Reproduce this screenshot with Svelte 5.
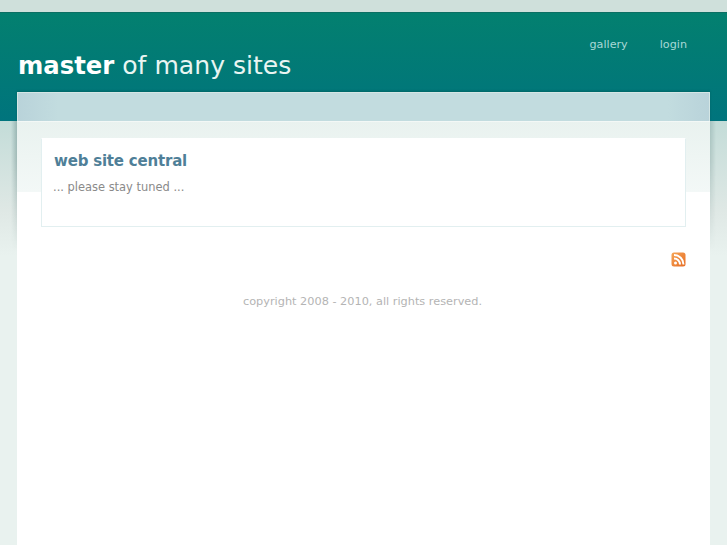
<script>
  const links = ['gallery', 'login'];
</script>

<div class="page">
  <div class="topstrip"></div>
  <header class="header">
    <h1 class="logo"><b>master</b> of many sites</h1>
    <nav class="nav">
      {#each links as l}
        <a href="#{l}">{l}</a>
      {/each}
    </nav>
  </header>
  <div class="backdrop"></div>
  <main class="panel">
    <div class="panel-top"></div>
    <div class="panel-body">
      <section class="card">
        <h2>web site central</h2>
        <p>... please stay tuned ...</p>
      </section>
      <div class="rss">
        <svg width="15" height="15" viewBox="0 0 15 15" aria-label="rss">
          <defs>
            <linearGradient id="rssg" x1="0" y1="0" x2="1" y2="1">
              <stop offset="0" stop-color="#f6a557" />
              <stop offset="1" stop-color="#e66c22" />
            </linearGradient>
          </defs>
          <rect x="0.500" y="0.500" width="14" height="14" rx="2.500" fill="url(#rssg)" />
          <circle cx="4.500" cy="11" r="1.500" fill="#fff" />
          <path d="M3 6.500a6 6 0 0 1 6 6M3 3a9.500 9.500 0 0 1 9.500 9.500" fill="none" stroke="#fff" stroke-width="2" />
        </svg>
      </div>
      <footer class="copy">copyright 2008 - 2010, all rights reserved.</footer>
    </div>
  </main>
</div>

<style>
  :global(body) {
    margin: 0;
    background: #fff;
    overflow: hidden;
  }
  .page {
    height: 545px;
    overflow: hidden;
    font-family: "DejaVu Sans", sans-serif;
  }
  .topstrip {
    height: 12px;
    background: #cfe0db;
  }
  .header {
    height: 109px;
    background: linear-gradient(#03806f, #00747d);
    box-shadow: inset 0 1px 0 #0b6f63;
    display: flex;
    justify-content: space-between;
    align-items: flex-start;
    padding: 0 40px 0 18px;
    box-sizing: border-box;
  }
  .logo {
    margin: 36px 0 0;
    font-size: 25.100px;
    line-height: 36px;
    font-weight: 400;
    color: #e9f5f2;
    white-space: nowrap;
  }
  .logo b {
    font-size: 24.300px;
    font-weight: 700;
    color: #fff;
  }
  .nav {
    display: flex;
    gap: 32px;
    margin-top: 25px;
  }
  .nav a {
    font-size: 11.200px;
    line-height: 16px;
    color: #a9d8d6;
    text-decoration: none;
  }
  .backdrop {
    height: 424px;
    background: linear-gradient(#c3dcd8, #dfe8e5 90px, #e9f2ef 135px);
  }
  .panel {
    position: absolute;
    left: 17px;
    top: 92px;
    width: 693px;
    height: 453px;
    display: flex;
    flex-direction: column;
  }
  /* soft edge shade, only along the upper part of the panel */
  .panel::before,
  .panel::after {
    content: "";
    position: absolute;
    top: 29px;
    width: 6px;
    height: 130px;
    -webkit-mask-image: linear-gradient(#000, #000 40px, transparent);
    mask-image: linear-gradient(#000, #000 40px, transparent);
  }
  .panel::before {
    left: -6px;
    background: linear-gradient(90deg, transparent, rgba(0, 50, 50, 0.22));
  }
  .panel::after {
    right: -6px;
    background: linear-gradient(270deg, transparent, rgba(0, 50, 50, 0.14));
  }
  .panel-top {
    height: 29px;
    flex: none;
    box-sizing: border-box;
    border: 1px solid #d5e6e5;
    border-bottom: 0;
    background: linear-gradient(90deg, #b9d3da, #c2dcdf 40px, #c2dcdf 650px, #b9d3da);
    box-shadow: 0 -1px 2px rgba(0, 50, 50, 0.25);
  }
  .panel-body {
    flex: 1;
    background: linear-gradient(#e9f2ef, #f3f8f7 71px, #ffffff 71px);
    box-shadow: inset 0 1px 0 #f3f8f6;
    padding: 17px 24px 0;
  }
  .card {
    height: 89px;
    box-sizing: border-box;
    background: #fff;
    border: 1px solid #e2eff0;
    border-top-color: #fff;
    padding: 12px 11px;
  }
  .card h2 {
    margin: 0 0 0 1px;
    font-size: 15px;
    letter-spacing: -0.200px;
    line-height: 20px;
    font-weight: 700;
    color: #4f7f98;
  }
  .card p {
    margin: 8px 0 0;
    font-size: 11.450px;
    line-height: 16px;
    color: #8a8a8a;
  }
  .rss {
    display: flex;
    justify-content: flex-end;
    margin-top: 25px;
    height: 15px;
  }
  .copy {
    margin-top: 27px;
    padding-right: 2px;
    text-align: center;
    font-size: 11.300px;
    line-height: 16px;
    color: #b4b4b4;
  }
</style>
